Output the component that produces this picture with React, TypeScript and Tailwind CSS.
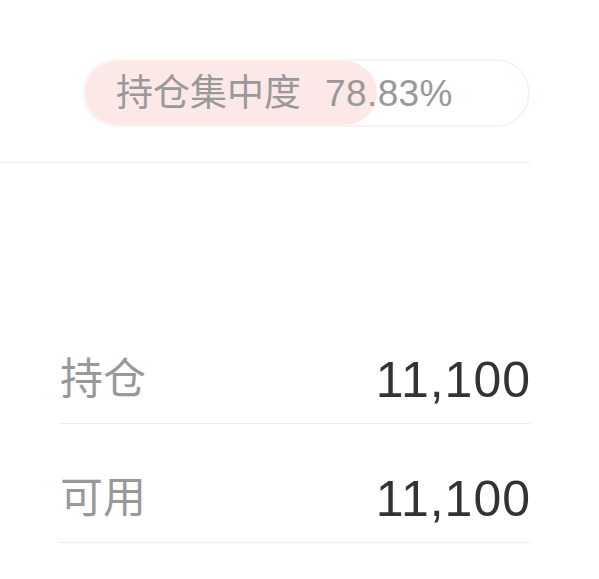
const font = { fontFamily: '"Liberation Sans", "Noto Sans CJK SC", sans-serif' }

function Row({ label, value }: { label: string; value: string }) {
  return (
    <div className="flex h-[119px] items-center justify-between border-b border-[#ebebeb] pt-[31px]">
      <span className="text-[43px] leading-none text-[#999]">{label}</span>
      <span className="mr-[-1px] text-[50px] leading-none tracking-[1px] text-[#333]">{value}</span>
    </div>
  )
}

export default function App() {
  return (
    <div className="min-h-[579px] w-[599px] bg-white" style={font}>
      <div className="w-[530px] border-b border-[#ececec] pb-[35px] pl-[83px] pt-[59px]">
        <div className="relative h-[68px] w-[447px] overflow-hidden rounded-full border-2 border-[#fdf0f0]">
          <div className="absolute left-0 top-0 h-full w-[292px] rounded-full bg-[#fde8e8]" />
          <div className="relative flex h-full items-center pl-[31px] text-[37px] leading-none text-[#999]">
            <span>持仓集中度</span>
            <span className="ml-[24px] tracking-[0.4px]">78.83%</span>
          </div>
        </div>
      </div>
      <div className="ml-[60px] mt-[142px] w-[470px]">
        <Row label="持仓" value="11,100" />
        <Row label="可用" value="11,100" />
      </div>
    </div>
  )
}
